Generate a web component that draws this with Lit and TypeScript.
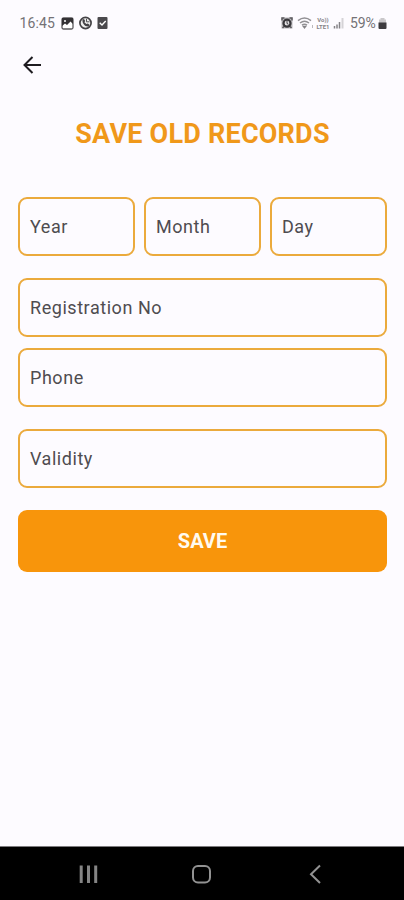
import { LitElement, html, css } from "lit";
import { customElement, property } from "lit/decorators.js";

@customElement("outlined-field")
class OutlinedField extends LitElement {
  @property() label = "";

  static styles = css`
    :host {
      display: flex;
      align-items: center;
      flex: 1;
      box-sizing: border-box;
      height: 59px;
      padding: 1px 0 0 10px;
      border: 2px solid #ebaa3c;
      border-radius: 9px;
      font: 400 18px/24px Roboto, sans-serif;
      letter-spacing: 0.55px;
      color: #4f4c50;
    }
  `;

  render() {
    return html`<span>${this.label}</span>`;
  }
}

@customElement("status-bar")
class StatusBar extends LitElement {
  static styles = css`
    :host {
      display: flex;
      justify-content: space-between;
      height: 46px;
      padding: 0 17px 0 19.5px;
      font: 400 14px/46px Roboto, sans-serif;
      color: #747276;
    }
    .group {
      display: flex;
      align-items: center;
    }
    .time {
      width: 41.5px;
      letter-spacing: 0.15px;
    }
    .notices {
      gap: 5px;
    }
    .percent {
      margin-left: 5px;
      width: 28px;
      letter-spacing: -0.1px;
    }
    .alarm {
      margin-right: 4px;
    }
    .lte {
      font: 700 6px/7.5px Roboto, sans-serif;
      width: 16px;
      margin: 0 2px 0 1px;
      text-align: center;
      color: #858387;
    }
    .lte div {
      white-space: nowrap;
    }
    svg {
      display: block;
      flex: none;
    }
  `;

  render() {
    return html`
      <div class="group">
        <span class="time">16:45</span>
        <div class="group notices">
          <svg width="13" height="13" viewBox="0 0 13 13">
            <rect x="1" y="1" width="11" height="11" rx="1.5" fill="#fff" stroke="#5b595c" stroke-width="1.3" />
            <path d="M1 1h11v6L9.500 4.500 6 8 4 6.500 1 9z" fill="#333134" />
            <circle cx="4" cy="4" r="1" fill="#fff" />
          </svg>
          <svg width="13" height="14" viewBox="0 0 13 14">
            <circle cx="6.500" cy="7" r="5.600" fill="#eee" stroke="#454347" stroke-width="1.700" />
            <path d="M3.500 3.500 5 3l1.200 2-.8 1.300 2 1.700 1.400-.5 1.700 1.300-.8 1.600C6 11 3 7.500 3.500 3.500z" fill="#444246" />
            <path d="M7.500 2.800v3h3" fill="none" stroke="#555357" />
          </svg>
          <svg width="11" height="14" viewBox="0 0 11 14">
            <rect x=".5" y="1" width="10" height="12" rx="1" fill="#4b494d" />
            <path d="M2.700 6.800 5 9l3.700-4" fill="none" stroke="#fff" stroke-width="1.400" />
          </svg>
        </div>
      </div>
      <div class="group">
        <svg class="alarm" width="12" height="12" viewBox="0 0 12 12">
          <rect x=".5" y=".5" width="11" height="11" fill="#bbb9bd" />
          <path d="M1 3.500V1h2.500M8.500 1H11v2.500M1.500 11l2-2M10.500 11l-2-2" fill="none" stroke="#5b595d" stroke-width="1.500" />
          <circle cx="6" cy="6.200" r="3.500" fill="#e4e2e5" stroke="#39373b" stroke-width="2.200" />
          <path d="M6 4v2.500l1.500.8" fill="none" stroke="#403e42" />
        </svg>
        <svg width="17" height="13" viewBox="0 0 17 13">
          <g fill="none" stroke="#939195" stroke-width="1.500">
            <path d="M1 3.600q6.500-5 13 0M3 6q4.500-3.500 9 0M5 8.200q2.500-2 5 0" />
          </g>
          <path d="m5 8.700 2.500 3.300 2.500-3.300z" fill="#858387" />
          <path d="M15.500 8v3" stroke="#bab8bc" />
        </svg>
        <div class="lte">
          <div>Vo))</div>
          <div>LTE1</div>
        </div>
        <svg width="12" height="12" viewBox="0 0 12 12">
          <path d="M1.500 9v2.500M4 7.500v4M6.500 5v6.500" stroke="#858387" stroke-width="1.500" />
          <path d="M9.500 1v10.500" stroke="#d5d3d7" stroke-width="2" />
        </svg>
        <span class="percent">59%</span>
        <svg width="9" height="13" viewBox="0 0 9 13">
          <path d="M2.500 1h4v1.500H8V6H1V2.500h1.500z" fill="#c9c7ca" />
          <path d="M.5 5.500h8V11q0 1-1 1h-6q-1 0-1-1z" fill="#3d3b3f" />
        </svg>
      </div>
    `;
  }
}

@customElement("navigation-bar")
class NavigationBar extends LitElement {
  static styles = css`
    :host {
      display: block;
      box-sizing: border-box;
      height: 54px;
      border-top: 1px solid #7d7b7e;
      background: #000;
    }
    svg {
      display: block;
    }
  `;

  render() {
    return html`
      <svg width="404" height="53" viewBox="0 847 404 53" fill="none" stroke="#929292">
        <path d="M81.200 865.500v17.500M88.500 865.500v17.500M95.700 865.500v17.500" stroke-width="3" stroke="#858585" />
        <rect x="193" y="866" width="17" height="16.500" rx="5" stroke-width="2" />
        <path d="m320 865.500-9 8.700 9 8.800" stroke-width="2" />
      </svg>
    `;
  }
}

@customElement("app-root")
class AppRoot extends LitElement {
  static styles = css`
    :host {
      display: flex;
      flex-direction: column;
      box-sizing: border-box;
      height: 900px;
      background: #fdfbff;
      font-family: Roboto, sans-serif;
    }
    .back {
      display: flex;
      height: 40px;
      padding-left: 22px;
    }
    .back svg {
      margin-top: 9px;
    }
    h1 {
      margin: 32px 0 0;
      padding-left: 1px;
      text-align: center;
      font: 700 27px/32px Roboto, sans-serif;
      letter-spacing: 0.22px;
      color: #f0981a;
    }
    form {
      display: flex;
      flex-direction: column;
      flex: 1;
      padding: 47px 17px 0 18px;
    }
    .date {
      display: flex;
      gap: 9px;
      margin-bottom: 22px;
    }
    form > outlined-field {
      flex: none;
      margin-bottom: 11px;
    }
    form > outlined-field.last {
      margin: 11px 0 22px;
    }
    button {
      height: 62px;
      padding: 0;
      border: 0;
      border-radius: 9px;
      background: #f8950b;
      color: #fffaf0;
      font: 700 20px/24px Roboto, sans-serif;
    }
  `;

  render() {
    return html`
      <status-bar></status-bar>
      <div class="back">
        <svg width="20" height="20" viewBox="0 0 20 20" fill="none" stroke="#1e1c20" stroke-width="2">
          <path d="M19 10H2.500M10.500 2l-8 8 8 8" />
        </svg>
      </div>
      <h1>SAVE OLD RECORDS</h1>
      <form>
        <div class="date">
          <outlined-field label="Year"></outlined-field>
          <outlined-field label="Month"></outlined-field>
          <outlined-field label="Day"></outlined-field>
        </div>
        <outlined-field label="Registration No"></outlined-field>
        <outlined-field label="Phone"></outlined-field>
        <outlined-field class="last" label="Validity"></outlined-field>
        <button type="button">SAVE</button>
      </form>
      <navigation-bar></navigation-bar>
    `;
  }
}
